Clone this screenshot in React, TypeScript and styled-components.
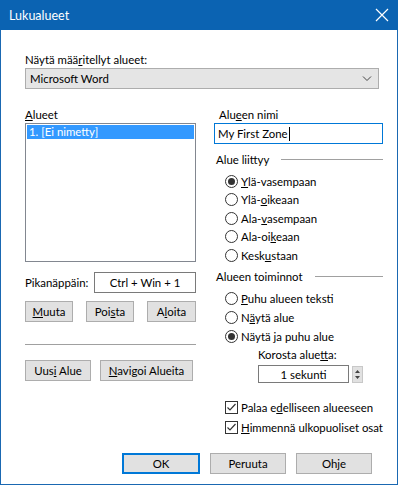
import React from "react";
import styled, { createGlobalStyle, css } from "styled-components";

const Global = createGlobalStyle`
  html, body { margin: 0; padding: 0; background: #fff; }
  body { font-family: Lato, "Noto Sans", "Liberation Sans", sans-serif; font-size: 11.4px; color: #000; }
  * { box-sizing: border-box; }
`;

const Window = styled.div`
  width: 398px;
  height: 485px;
  display: flex;
  flex-direction: column;
  border: 1px solid #1a68b2;
  border-top: none;
  background: #fff;
`;

const TitleBar = styled.div`
  height: 30px;
  margin: 0 -1px;
  background: #0b63b2;
  color: #fff;
  display: flex;
  align-items: center;
  justify-content: space-between;
  padding: 0 9px 0 9px;
  font-size: 12.5px;
`;

const Body = styled.div`
  flex: 1;
  padding: 22px 18px 0 24px;
  display: flex;
  flex-direction: column;
`;

const Label = styled.div<{ $mt?: number; $ml?: number }>`
  line-height: 16px;
  height: 16px;
  white-space: nowrap;
  margin-top: ${(p) => p.$mt ?? 0}px;
  margin-left: ${(p) => p.$ml ?? 0}px;
`;

const Combo = styled.div`
  width: 354px;
  height: 21px;
  background: #e5e5e5;
  border: 1px solid #adadad;
  display: flex;
  align-items: center;
  justify-content: space-between;
  padding: 0 6px 0 4px;
`;

const Columns = styled.div`
  display: grid;
  grid-template-columns: 171px 169px;
  column-gap: 18px;
  margin-top: 18px;
`;

const Col = styled.div`
  display: flex;
  flex-direction: column;
`;

const ListBox = styled.div`
  height: 139px;
  border: 1px solid #828790;
  padding: 1px;
`;

const ListItem = styled.div<{ $selected?: boolean }>`
  height: 14px;
  line-height: 14px;
  padding-left: 2px;
  ${(p) =>
    p.$selected &&
    css`
      background: #3399ff;
      color: #fff;
    `}
`;

const HotkeyRow = styled.div`
  margin-top: 10px;
  display: flex;
  align-items: center;
  justify-content: space-between;
`;

const TextBox = styled.div<{ $focused?: boolean; $w: number; $h?: number; $center?: boolean }>`
  width: ${(p) => p.$w}px;
  height: ${(p) => p.$h ?? 21}px;
  border: 1px solid ${(p) => (p.$focused ? "#0078d7" : "#7a7a7a")};
  display: flex;
  align-items: center;
  justify-content: ${(p) => (p.$center ? "center" : "flex-start")};
  padding: 0 ${(p) => (p.$center ? 0 : 3)}px;
  white-space: nowrap;
`;

const Caret = styled.span`
  display: inline-block;
  width: 1px;
  height: 14px;
  background: #000;
  margin-left: 1px;
`;

const ButtonRow = styled.div<{ $mt: number; $justify?: string; $gap?: number }>`
  display: flex;
  margin-top: ${(p) => p.$mt}px;
  justify-content: ${(p) => p.$justify ?? "space-between"};
  gap: ${(p) => p.$gap ?? 0}px;
`;

const ButtonBox = styled.div<{ $w: number; $default?: boolean; $h?: number }>`
  width: ${(p) => p.$w}px;
  height: ${(p) => p.$h ?? 21}px;
  background: #e1e1e1;
  border: ${(p) => (p.$default ? "2px solid #0078d7" : "1px solid #adadad")};
  display: flex;
  align-items: center;
  justify-content: center;
  white-space: nowrap;
`;

const Separator = styled.div`
  margin-top: 22px;
  height: 1px;
  background: #a0a0a0;
`;

const GroupHeader = styled.div<{ $mt: number }>`
  margin-top: ${(p) => p.$mt}px;
  display: flex;
  align-items: center;
  gap: 8px;
  padding-left: 2px;
  height: 16px;
  white-space: nowrap;
  &::after {
    content: "";
    flex: 1;
    height: 1px;
    background: #a0a0a0;
    margin-left: 4px;
  }
`;

const OptionList = styled.div<{ $mt: number; $gap: number }>`
  display: flex;
  flex-direction: column;
  gap: ${(p) => p.$gap}px;
  margin-top: ${(p) => p.$mt}px;
  padding-left: 11px;
`;

const Option = styled.div`
  display: flex;
  align-items: center;
  height: 16px;
  gap: 3px;
  white-space: nowrap;
`;

const RadioCircle = styled.span<{ $checked?: boolean }>`
  width: 13px;
  height: 13px;
  border-radius: 50%;
  border: 1px solid #333;
  background: #fff;
  display: flex;
  align-items: center;
  justify-content: center;
  &::after {
    content: "";
    width: 7px;
    height: 7px;
    border-radius: 50%;
    background: ${(p) => (p.$checked ? "#333" : "transparent")};
  }
`;

const CheckBox = styled.span`
  width: 13px;
  height: 13px;
  border: 1px solid #333;
  background: #fff;
  display: flex;
  align-items: center;
  justify-content: center;
`;

const SpinRow = styled.div`
  display: flex;
  align-items: center;
  gap: 3px;
  margin-top: 2px;
  padding-left: 44px;
`;

const SpinButton = styled.div`
  width: 11px;
  height: 17px;
  background: #e1e1e1;
  border: 1px solid #c8c8c8;
  display: flex;
  flex-direction: column;
  align-items: center;
  justify-content: center;
`;

const Footer = styled.div`
  display: flex;
  justify-content: flex-end;
  gap: 10px;
  margin-top: 18px;
  padding-right: 7px;
`;

const U = styled.span`
  text-decoration: underline;
`;

const Button = ({
  w,
  isDefault,
  children,
}: {
  w: number;
  isDefault?: boolean;
  children: React.ReactNode;
}) => (
  <ButtonBox $w={w} $default={isDefault}>
    <span>{children}</span>
  </ButtonBox>
);

const Radio = ({ checked, children }: { checked?: boolean; children: React.ReactNode }) => (
  <Option>
    <RadioCircle $checked={checked} />
    <span>{children}</span>
  </Option>
);

const Check = ({ children }: { children: React.ReactNode }) => (
  <Option>
    <CheckBox>
      <svg width="11" height="11" viewBox="0 0 11 11">
        <path d="M1.5 5.5 L4 8 L9.5 2" fill="none" stroke="#333" strokeWidth="1.2" />
      </svg>
    </CheckBox>
    <span>{children}</span>
  </Option>
);

export default function App() {
  return (
    <>
      <Global />
      <Window>
        <TitleBar>
          <span>Lukualueet</span>
          <svg width="14" height="14" viewBox="0 0 14 14">
            <path d="M1 1 L13 13 M13 1 L1 13" stroke="#fff" strokeWidth="1.2" />
          </svg>
        </TitleBar>
        <Body>
          <Label>
            Näytä mää<U>r</U>itellyt alueet:
          </Label>
          <Combo>
            <span>Microsoft Word</span>
            <svg width="10" height="6" viewBox="0 0 10 6">
              <path d="M1 0.5 L5 4.5 L9 0.5" fill="none" stroke="#444" strokeWidth="1" />
            </svg>
          </Combo>
          <Columns>
            <Col>
              <Label>
                <U>A</U>lueet
              </Label>
              <ListBox>
                <ListItem $selected>1. [Ei nimetty]</ListItem>
              </ListBox>
              <HotkeyRow>
                <span>Pikanäppäin:</span>
                <TextBox $w={102} $center>
                  Ctrl + Win + 1
                </TextBox>
              </HotkeyRow>
              <ButtonRow $mt={8}>
                <Button w={48}>
                  <U>M</U>uuta
                </Button>
                <Button w={48}>
                  Poi<U>s</U>ta
                </Button>
                <Button w={49}>
                  A<U>l</U>oita
                </Button>
              </ButtonRow>
              <Separator />
              <ButtonRow $mt={15} $justify="flex-start" $gap={9}>
                <Button w={66}>
                  Uus<U>i</U> Alue
                </Button>
                <Button w={93}>
                  <U>N</U>avigoi Alueita
                </Button>
              </ButtonRow>
            </Col>
            <Col>
              <Label $ml={5}>
                Alu<U>e</U>en nimi
              </Label>
              <TextBox $w={169} $focused>
                My First Zone
                <Caret />
              </TextBox>
              <GroupHeader $mt={7}>Alue liittyy</GroupHeader>
              <OptionList $mt={6} $gap={2.5}>
                <Radio checked>
                  <U>Y</U>lä-vasempaan
                </Radio>
                <Radio>
                  Ylä-<U>o</U>ikeaan
                </Radio>
                <Radio>
                  Ala-<U>v</U>asempaan
                </Radio>
                <Radio>
                  Ala-oi<U>k</U>eaan
                </Radio>
                <Radio>
                  Kesk<U>u</U>staan
                </Radio>
              </OptionList>
              <GroupHeader $mt={5}>Alueen toiminnot</GroupHeader>
              <OptionList $mt={6} $gap={3}>
                <Radio>
                  <U>P</U>uhu alueen teksti
                </Radio>
                <Radio>
                  N<U>ä</U>ytä alue
                </Radio>
                <Radio checked>
                  Näytä <U>j</U>a puhu alue
                </Radio>
              </OptionList>
              <Label $mt={3} $ml={44}>
                Korosta alue<U>t</U>ta:
              </Label>
              <SpinRow>
                <TextBox $w={91} $h={18} $center>
                  1 sekunti
                </TextBox>
                <SpinButton>
                  <svg width="7" height="11" viewBox="0 0 7 11">
                    <path d="M3.5 1 L6 4 L1 4 Z M3.5 10 L6 7 L1 7 Z" fill="#444" />
                  </svg>
                </SpinButton>
              </SpinRow>
              <OptionList $mt={16} $gap={4}>
                <Check>
                  Palaa e<U>d</U>elliseen alueeseen
                </Check>
                <Check>
                  <U>H</U>immennä ulkopuoliset osat
                </Check>
              </OptionList>
            </Col>
          </Columns>
          <Footer>
            <Button w={78} isDefault>
              OK
            </Button>
            <Button w={76}>Peruuta</Button>
            <Button w={76}>Ohje</Button>
          </Footer>
        </Body>
      </Window>
    </>
  );
}
